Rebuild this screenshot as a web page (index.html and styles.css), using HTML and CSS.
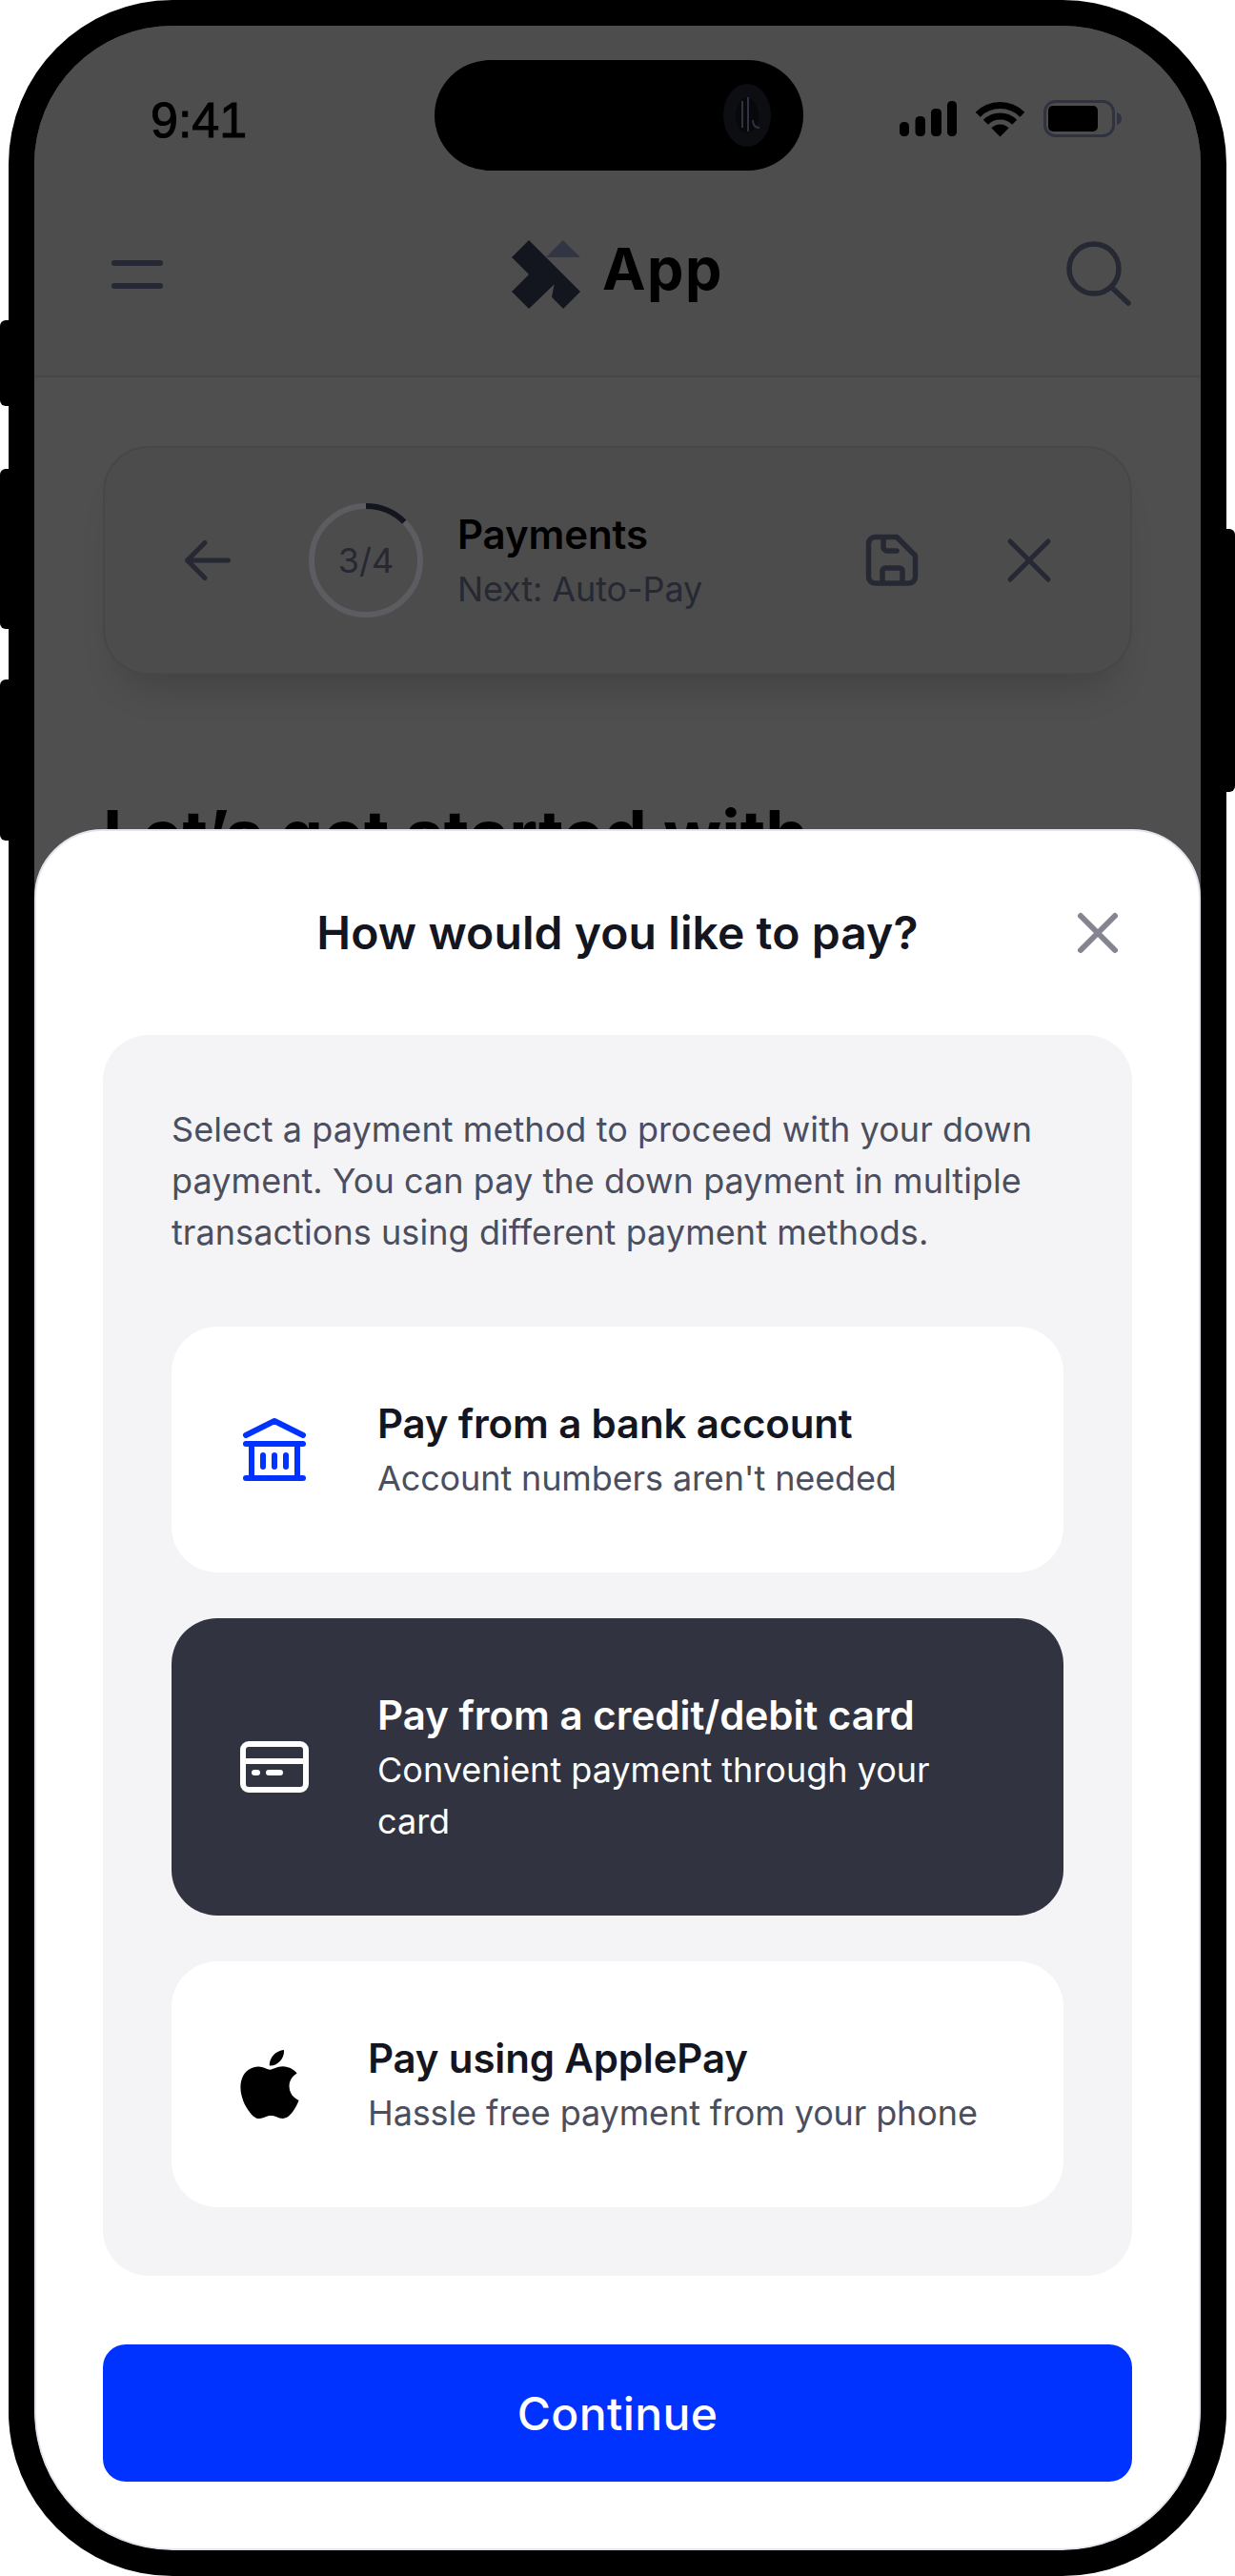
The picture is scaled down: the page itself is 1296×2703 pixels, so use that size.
FILE: index.html
```html
<!DOCTYPE html>
<html lang="en">
<head>
<meta charset="utf-8">
<title>Payment method</title>
<link rel="stylesheet" href="styles.css">
</head>
<body>
<div class="device">
  <span class="side side-l1"></span>
  <span class="side side-l2"></span>
  <span class="side side-l3"></span>
  <span class="side side-r1"></span>
  <div class="screen">
    <div class="status">
      <span class="time">9:41</span>
      <div class="status-icons">
        <svg class="ic-signal" viewBox="0 0 61 37"><rect x="1" y="22" width="10" height="15" rx="4.5"/><rect x="17.5" y="16" width="10.5" height="21" rx="4.5"/><rect x="34" y="8" width="11" height="29" rx="4.5"/><rect x="51" y="0" width="10" height="37" rx="4.5"/></svg>
        <svg class="ic-wifi" viewBox="0 0 53 38"><path d="M3.2 14.2A33 33 0 0 1 49.8 14.2M11.3 22.3A21.5 21.5 0 0 1 41.7 22.3" fill="none" stroke="#000" stroke-width="7"/><path d="M26.5 37.5L17.3 28.3A13 13 0 0 1 35.7 28.3Z"/></svg>
        <svg class="ic-batt" viewBox="0 0 84 39"><rect x="1.5" y="1.5" width="72" height="36" rx="11" fill="none" stroke="#2f3240" stroke-width="3"/><rect x="5" y="6" width="52" height="27" rx="5"/><path d="M77 13c3 1 5 3 5 6.500s-2 5.500-5 6.500z" fill="#2f3240"/></svg>
      </div>
    </div>
    <div class="island">
      <svg class="cam" viewBox="0 0 50 66"><ellipse cx="25" cy="33" rx="25" ry="33" fill="#0d0e12"/><ellipse cx="25" cy="33" rx="12" ry="18" fill="#08080b"/><path d="M20 18V46M26 14V50M31 38C31 44 34 46 38 46" fill="none" stroke="#2f3240" stroke-width="2"/></svg>
    </div>

    <header class="topbar">
      <svg class="ic-72" viewBox="0 0 72 72"><path d="M12 24H60M12 48H60" class="line" stroke-width="6"/></svg>
      <div class="logo">
        <svg class="logo-mark" viewBox="0 0 72 72"><path d="M18 0L0 18L18 36L0 54L18 72L44.700 46.300L42 59.700L54 72L72 54Z" fill="#14161f"/><path d="M53.700 0L72 18H36Z" fill="#323544"/></svg>
        <span class="logo-text">App</span>
      </div>
      <svg class="ic-72" viewBox="0 0 72 72"><circle cx="32" cy="30" r="26" class="line" stroke-width="5.500"/><path d="M50 49L68 66" class="line" stroke-width="5.500"/></svg>
    </header>

    <main class="content">
      <section class="stepper">
        <svg class="ic-72" viewBox="0 0 72 72"><path d="M59.500 36H16.500M35 17.500L16.500 36L35 54.500" class="line" stroke-width="5"/></svg>
        <div class="ring">
          <svg class="ring-svg" viewBox="0 0 120 120"><circle cx="60" cy="60" r="57" fill="none" stroke="#5c5c61" stroke-width="6"/><path d="M60 3A57 57 0 0 1 100.300 19.700" fill="none" stroke="#14161f" stroke-width="6"/></svg>
          <span class="ring-label">3/4</span>
        </div>
        <div class="step-text">
          <div class="step-title">Payments</div>
          <div class="step-next">Next: Auto-Pay</div>
        </div>
        <svg class="ic-72" viewBox="0 0 72 72"><path d="M18.500 11.500H41L60.500 31V53a7 7 0 0 1-7 7H18.500a7 7 0 0 1-7-7V18.500a7 7 0 0 1 7-7zM27 11.500V22a4 4 0 0 0 4 4H41M26 60V47a3 3 0 0 1 3-3H44a3 3 0 0 1 3 3V60" class="line" stroke-width="5.500"/></svg>
        <svg class="ic-72" viewBox="0 0 72 72"><path d="M16 16L56 56M56 16L16 56" class="line" stroke-width="5"/></svg>
      </section>
      <h1 class="behind">Let’s get started with</h1>
    </main>

    <div class="sheet">
      <div class="sheet-head">
        <span></span>
        <h2 class="sheet-title">How would you like to pay?</h2>
        <svg class="ic-72" viewBox="0 0 72 72"><path d="M18 18L54 54M54 18L18 54" fill="none" stroke="#84858f" stroke-width="6" stroke-linecap="round"/></svg>
      </div>
      <div class="panel">
        <p class="intro">Select a payment method to proceed with your down payment. You can pay the down payment in multiple transactions using different payment methods.</p>
        <div class="option">
          <svg class="ic-72" viewBox="0 0 72 72"><path d="M6 21L36 6L66 21M6 30H66M12 30V66M60 30V66M6 66H66M24 42V54M36 42V54M48 42V54" fill="none" stroke="#0033ff" stroke-width="6" stroke-linecap="round" stroke-linejoin="round"/></svg>
          <div>
            <div class="opt-title">Pay from a bank account</div>
            <div class="opt-sub">Account numbers aren't needed</div>
          </div>
        </div>
        <div class="option selected">
          <svg class="ic-72" viewBox="0 0 72 72"><rect x="3" y="12" width="66" height="48" rx="6" fill="none" stroke="#fff" stroke-width="6"/><path d="M3 30H69" stroke="#fff" stroke-width="6"/><path d="M15 42H18M30 42H42" stroke="#fff" stroke-width="6" stroke-linecap="round"/></svg>
          <div>
            <div class="opt-title">Pay from a credit/debit card</div>
            <div class="opt-sub">Convenient payment through your card</div>
          </div>
        </div>
        <div class="option">
          <svg class="ic-apple" viewBox="2.100 0 19.800 24" preserveAspectRatio="none"><path d="M12.152 6.896c-.948 0-2.415-1.078-3.960-1.040-2.040.027-3.910 1.183-4.961 3.014-2.117 3.675-.546 9.103 1.519 12.090 1.013 1.454 2.208 3.090 3.792 3.039 1.520-.065 2.090-.987 3.935-.987 1.831 0 2.350.987 3.960.948 1.637-.026 2.676-1.480 3.676-2.948 1.156-1.688 1.636-3.325 1.662-3.415-.039-.013-3.182-1.221-3.220-4.857-.026-3.040 2.480-4.494 2.597-4.559-1.429-2.090-3.623-2.324-4.390-2.376-2-.156-3.675 1.090-4.610 1.090zM15.530 3.830c.843-1.012 1.400-2.427 1.245-3.830-1.207.052-2.662.805-3.532 1.818-.780.896-1.454 2.338-1.273 3.714 1.338.104 2.715-.688 3.559-1.701"/></svg>
          <div>
            <div class="opt-title">Pay using ApplePay</div>
            <div class="opt-sub">Hassle free payment from your phone</div>
          </div>
        </div>
      </div>
      <button class="cta" type="button">Continue</button>
    </div>
  </div>
</div>
</body>
</html>
```
FILE: styles.css
```css
* { box-sizing: border-box; }
html, body { margin: 0; background: #fff; }
body { font-family: Inter, "Liberation Sans", sans-serif; }

.device {
  position: relative;
  width: 1278px;
  height: 2703px;
  margin-left: 9px;
  padding: 27px;
  background: #000;
  border-radius: 172px;
}
.side { position: absolute; width: 10px; background: #000; }
.side-l1 { left: -9px; top: 336px; height: 90px; border-radius: 6px 0 0 6px; }
.side-l2 { left: -9px; top: 492px; height: 168px; border-radius: 6px 0 0 6px; }
.side-l3 { left: -9px; top: 713px; height: 169px; border-radius: 6px 0 0 6px; }
.side-r1 { right: -9px; top: 555px; height: 276px; border-radius: 0 6px 6px 0; }

.screen {
  position: relative;
  height: 2649px;
  overflow: hidden;
  border-radius: 145px;
  background: #4f4f4f;
  display: flex;
  flex-direction: column;
}

.status {
  height: 181px;
  padding: 79px 0 0 122px;
  background: #4d4d4d;
  display: flex;
  justify-content: space-between;
  align-items: flex-start;
}
.time {
  font-family: "Liberation Sans", Arial, sans-serif;
  font-size: 52px;
  line-height: 40px;
  color: #000;
  -webkit-text-stroke: 1px #000;
}
.status-icons { display: flex; align-items: flex-start; gap: 19px; padding-right: 81px; }
.ic-signal { width: 61px; height: 37px; display: block; }
.ic-wifi { width: 53px; height: 38px; display: block; }
.ic-batt { width: 84px; height: 39px; display: block; margin-top: -1px; }

.island {
  position: absolute;
  left: 420px;
  top: 36px;
  width: 387px;
  height: 116px;
  border-radius: 58px;
  background: #000;
}
.cam { position: absolute; left: 303px; top: 25px; width: 50px; height: 66px; }

.topbar {
  height: 188px;
  padding: 0 72px 26px;
  background: #4d4d4d;
  border-bottom: 2px solid #474747;
  display: flex;
  justify-content: space-between;
  align-items: center;
}
.ic-72 { width: 72px; height: 72px; flex: none; display: block; overflow: visible; }
.line { fill: none; stroke: #262833; stroke-linecap: round; stroke-linejoin: round; }

.logo { display: flex; align-items: center; gap: 23px; }
.logo-mark { width: 72px; height: 72px; display: block; }
.logo-text { font-size: 61px; line-height: 72px; font-weight: 700; color: #000; letter-spacing: 1.5px; position: relative; top: -6px; }

.content { padding: 72px 72px 0; flex: 1; min-height: 0; }

.stepper {
  height: 240px;
  padding: 0 70px;
  border: 2px solid #474747;
  border-radius: 48px;
  background: #4c4c4c;
  box-shadow: 0 30px 40px -20px rgba(0, 0, 0, 0.18);
  display: flex;
  align-items: center;
}
.ring { margin-left: 72px; width: 120px; height: 120px; display: grid; place-items: center; flex: none; }
.ring-svg, .ring-label { grid-area: 1 / 1; }
.ring-svg { width: 120px; height: 120px; display: block; }
.ring-label { font-size: 36px; line-height: 54px; color: #262833; }
.step-text { margin-left: 36px; flex: 1; }
.step-title { font-size: 42px; line-height: 60px; font-weight: 600; color: #000; letter-spacing: -0.1px; }
.step-next { font-size: 36px; line-height: 54px; color: #262833; letter-spacing: -0.1px; }
.stepper .ic-72:last-child { margin-left: 72px; }

.behind { margin: 126px 0 0; font-size: 72px; line-height: 84px; font-weight: 700; color: #000; }

.sheet {
  position: absolute;
  left: 0;
  right: 0;
  top: 843px;
  bottom: 0;
  padding: 0 70px;
  background: #fff;
  border: 2px solid #e4e4ee;
  border-radius: 72px 72px 145px 145px;
  display: flex;
  flex-direction: column;
}
.sheet-head {
  height: 214px;
  display: grid;
  grid-template-columns: 72px 1fr 72px;
  align-items: center;
}
.sheet-title { margin: 0; text-align: center; font-size: 48px; line-height: 72px; font-weight: 600; color: #14161f; letter-spacing: 0.1px; }

.panel {
  padding: 72px;
  background: #f4f4f6;
  border-radius: 48px;
  display: flex;
  flex-direction: column;
  gap: 48px;
}
.intro { margin: 0 0 24px; font-size: 36px; line-height: 54px; color: #4b4e5e; letter-spacing: 0.07px; }

.option {
  padding: 72px;
  background: #fff;
  border-radius: 48px;
  display: flex;
  align-items: center;
  gap: 72px;
}
.opt-title { font-size: 42px; line-height: 60px; font-weight: 600; color: #14161f; letter-spacing: -0.15px; }
.opt-sub { font-size: 36px; line-height: 54px; color: #4b4e5e; letter-spacing: -0.12px; }
.selected { background: #313440; }
.selected .opt-title, .selected .opt-sub { color: #fff; letter-spacing: 0; }
.ic-apple { width: 62px; height: 72px; flex: none; display: block; fill: #000; }

.cta {
  margin-top: 72px;
  height: 144px;
  border: 0;
  border-radius: 24px;
  background: #0033ff;
  color: #fff;
  font-family: inherit;
  font-size: 48px;
  font-weight: 500;
  letter-spacing: 0.4px;
}
```
